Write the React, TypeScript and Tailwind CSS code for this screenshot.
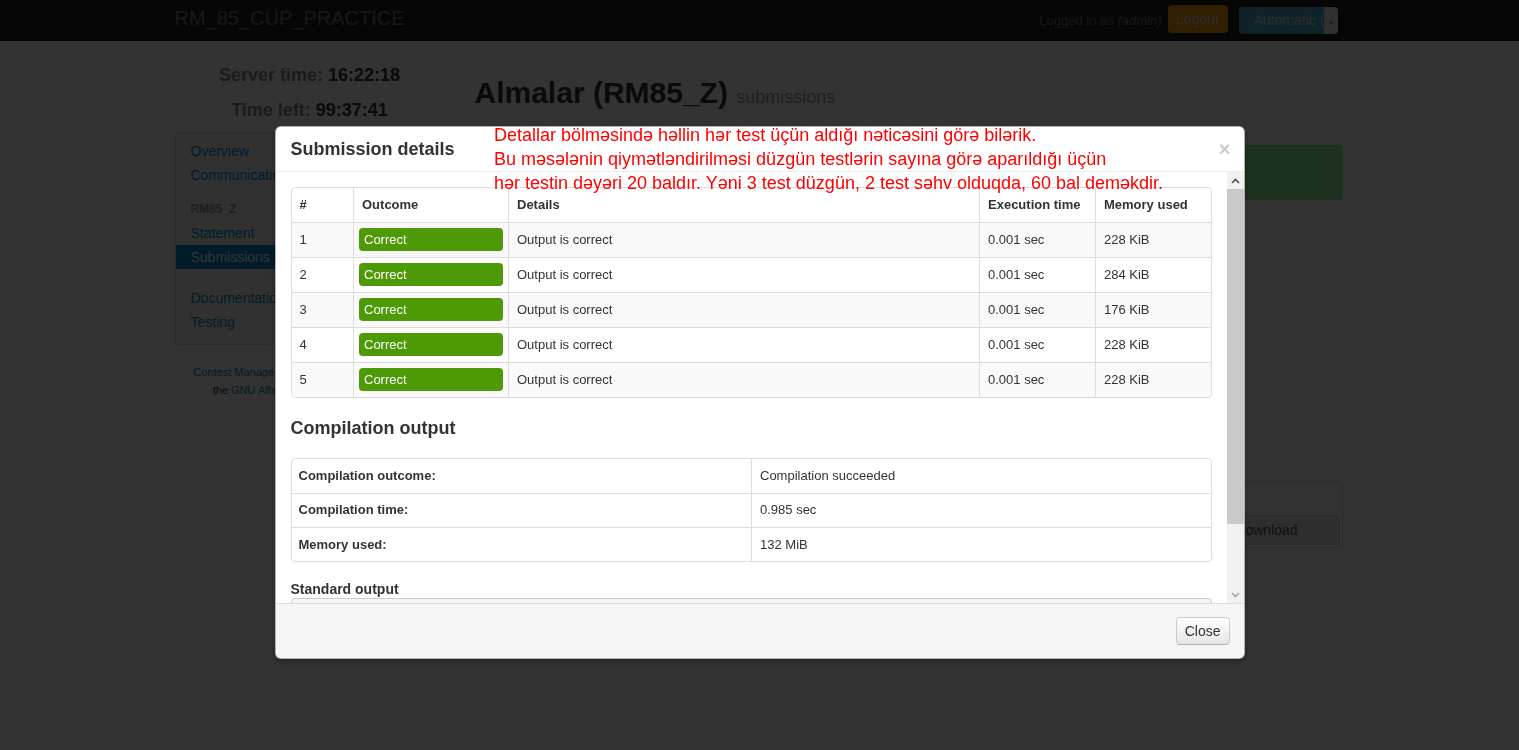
import React from "react";

const rows = [
  { n: 1, mem: "228 KiB" },
  { n: 2, mem: "284 KiB" },
  { n: 3, mem: "176 KiB" },
  { n: 4, mem: "228 KiB" },
  { n: 5, mem: "228 KiB" },
];

const compile = [
  ["Compilation outcome:", "Compilation succeeded"],
  ["Compilation time:", "0.985 sec"],
  ["Memory used:", "132 MiB"],
];

function Navbar() {
  return (
    <div className="h-[41px] bg-[#222]">
      <div className="w-[1170px] mx-auto h-full flex items-center justify-between">
        <span className="text-[20px] text-[#777] leading-none -mt-[5px]">RM_85_CUP_PRACTICE</span>
        <div className="flex items-center h-full">
          <span className="text-[13px] text-[#777] mr-[6px]">
            Logged in as <i>(admin)</i>
          </span>
          <button className="h-[28px] w-[60px] rounded-[4px] bg-[#f89406] text-[#ddd] text-[14px] -mt-[3px]">
            Logout
          </button>
          <div className="ml-[11px] mr-[7px] h-[27px] w-[99px] rounded-[4px] bg-[#49afcd] flex items-center overflow-hidden">
            <span className="text-[#ddd] text-[14px] pl-[15px] flex-1 whitespace-nowrap">Automatic (</span>
            <span className="w-[16px] h-full bg-[#eee] flex items-center justify-center text-[10px] text-[#555]">⌄</span>
          </div>
        </div>
      </div>
    </div>
  );
}

function Sidebar() {
  const link = "h-[24px] flex items-center px-[15px] text-[14px] text-[#0088cc]";
  return (
    <div className="w-[270px] shrink-0">
      <p className="mt-[22px] text-center text-[18px] leading-[24px] font-bold text-[#888]">
        Server time: <span className="text-[#333]">16:22:18</span>
      </p>
      <p className="mt-[11px] text-center text-[18px] leading-[24px] font-bold text-[#888]">
        Time left: <span className="text-[#333]">99:37:41</span>
      </p>
      <div className="mt-[10px] border border-[#d8d8d8] bg-[#f5f5f5] rounded-[4px] pt-[6px] pb-[10px]">
        <div className={link}>Overview</div>
        <div className={link}>Communication</div>
        <div className="mt-[10px] h-[24px] flex items-center px-[15px] text-[12px] font-bold text-[#999]">RM85_Z</div>
        <div className={link}>Statement</div>
        <div className="h-[24px] flex items-center px-[15px] text-[14px] text-white bg-[#0088cc]">Submissions</div>
        <div className="my-[8px] mx-[15px] h-px bg-[#e5e5e5]" />
        <div className={link}>Documentation</div>
        <div className={link}>Testing</div>
      </div>
      <div className="mt-[18px] text-center text-[11px] leading-[18px] text-[#333]">
        <p>
          <span className="text-[#0088cc]">Contest Management System</span> is released under
        </p>
        <p>
          the <span className="text-[#0088cc]">GNU Affero General Public License</span>.
        </p>
      </div>
    </div>
  );
}

function MainArea() {
  return (
    <div className="w-[870px]">
      <h1 className="mt-[32px] text-[30px] leading-[40px] font-bold text-[#333]">
        Almalar (RM85_Z) <span className="text-[18px] font-normal text-[#999]">submissions</span>
      </h1>
      <div className="mt-[28px] h-[55px] mr-[2px] rounded-[4px] bg-[#8cf596]" />
      <div className="mt-[281px] h-[67px] mr-[2px] rounded-[4px] border border-[#ddd] flex items-end justify-end p-[2px]">
        <div className="w-[146px] h-[30px] rounded-[4px] border border-[#ccc] bg-[#e6e6e6] flex items-center justify-center text-[14px] text-[#555]">
          Download
        </div>
      </div>
    </div>
  );
}

function Scrollbar() {
  return (
    <div className="w-[17px] shrink-0 bg-[#f1f1f1] flex flex-col">
      <div className="h-[17px] flex items-center justify-center">
        <svg width="9" height="6" viewBox="0 0 9 6">
          <path d="M1 5 L4.5 1.5 L8 5" stroke="#505050" strokeWidth="1.6" fill="none" />
        </svg>
      </div>
      <div className="h-[335px] bg-[#c9c9c9]" />
      <div className="flex-1" />
      <div className="h-[17px] flex items-center justify-center">
        <svg width="9" height="6" viewBox="0 0 9 6">
          <path d="M1 1 L4.5 4.5 L8 1" stroke="#a3a3a3" strokeWidth="1.6" fill="none" />
        </svg>
      </div>
    </div>
  );
}

function Modal() {
  const th = "h-[34px] px-[8px] text-left font-bold";
  const td = "h-[35px] px-[8px] border-t border-[#ddd]";
  return (
    <div className="fixed left-1/2 -ml-[485px] top-[126px] w-[970px] bg-white border border-black/30 rounded-[6px] shadow-[0_3px_7px_rgba(0,0,0,0.3)] overflow-hidden text-[#333]">
      <div className="h-[45px] border-b border-[#eee] flex items-center justify-between px-[15px]">
        <h3 className="text-[18px] leading-[20px] font-bold">Submission details</h3>
        <span className="text-[20px] font-bold text-[#ccc] leading-none -mr-[2px]">×</span>
      </div>
      <div className="h-[431px] flex">
        <div className="flex-1 overflow-hidden px-[15px] pt-[15px]">
          <div className="border border-[#ddd] rounded-[4px] overflow-hidden">
            <table className="w-full table-fixed border-collapse text-[13px]">
              <thead>
                <tr>
                  <th className={`${th} w-[62px]`}>#</th>
                  <th className={`${th} w-[155px] border-l border-[#ddd]`}>Outcome</th>
                  <th className={`${th} border-l border-[#ddd]`}>Details</th>
                  <th className={`${th} w-[116px] border-l border-[#ddd]`}>Execution time</th>
                  <th className={`${th} w-[115px] border-l border-[#ddd]`}>Memory used</th>
                </tr>
              </thead>
              <tbody>
                {rows.map((r) => (
                  <tr key={r.n} className={r.n % 2 === 1 ? "bg-[#f9f9f9]" : "bg-white"}>
                    <td className={td}>{r.n}</td>
                    <td className={`${td} border-l !px-[5px]`}>
                      <div className="h-[23px] rounded-[4px] bg-[#4e9a06] text-white text-[13px] flex items-center px-[5px]">
                        Correct
                      </div>
                    </td>
                    <td className={`${td} border-l`}>Output is correct</td>
                    <td className={`${td} border-l`}>0.001 sec</td>
                    <td className={`${td} border-l`}>{r.mem}</td>
                  </tr>
                ))}
              </tbody>
            </table>
          </div>
          <h3 className="mt-[20px] text-[18px] leading-[20px] font-bold">Compilation output</h3>
          <div className="mt-[20px] border border-[#ddd] rounded-[4px] overflow-hidden">
            <table className="w-full table-fixed border-collapse text-[13px]">
              <tbody>
                {compile.map(([k, v], i) => (
                  <tr key={k}>
                    <td className={`h-[34px] px-[7px] w-[460px] font-bold ${i > 0 ? "border-t border-[#ddd]" : ""}`}>{k}</td>
                    <td className={`h-[34px] px-[8px] border-l border-[#ddd] ${i > 0 ? "border-t" : ""}`}>{v}</td>
                  </tr>
                ))}
              </tbody>
            </table>
          </div>
          <p className="mt-[18px] text-[14px] leading-[18px] font-bold">Standard output</p>
          <div className="h-[40px] border border-[#ccc] rounded-[4px] bg-[#f5f5f5]" />
        </div>
        <Scrollbar />
      </div>
      <div className="h-[55px] border-t border-[#ddd] bg-[#f5f5f5] flex items-center justify-end px-[14px]">
        <button className="h-[28px] px-[8px] rounded-[4px] border border-[#ccc] border-b-[#b3b3b3] bg-gradient-to-b from-white to-[#e6e6e6] text-[14px] text-[#333]">
          Close
        </button>
      </div>
    </div>
  );
}

export default function App() {
  return (
    <div className="relative min-h-screen bg-white font-['Liberation_Sans',Arial,sans-serif]">
      <Navbar />
      <div className="w-[1170px] mx-auto flex gap-[30px]">
        <Sidebar />
        <MainArea />
      </div>
      <div className="fixed inset-0 bg-black/80" />
      <Modal />
      <div className="fixed left-[494px] top-[123px] text-[18px] leading-[24px] text-[#ff0000] whitespace-nowrap">
        <p>Detallar bölməsində həllin hər test üçün aldığı nəticəsini görə bilərik.</p>
        <p>Bu məsələnin qiymətləndirilməsi düzgün testlərin sayına görə aparıldığı üçün</p>
        <p>hər testin dəyəri 20 baldır. Yəni 3 test düzgün, 2 test səhv olduqda, 60 bal deməkdir.</p>
      </div>
    </div>
  );
}
